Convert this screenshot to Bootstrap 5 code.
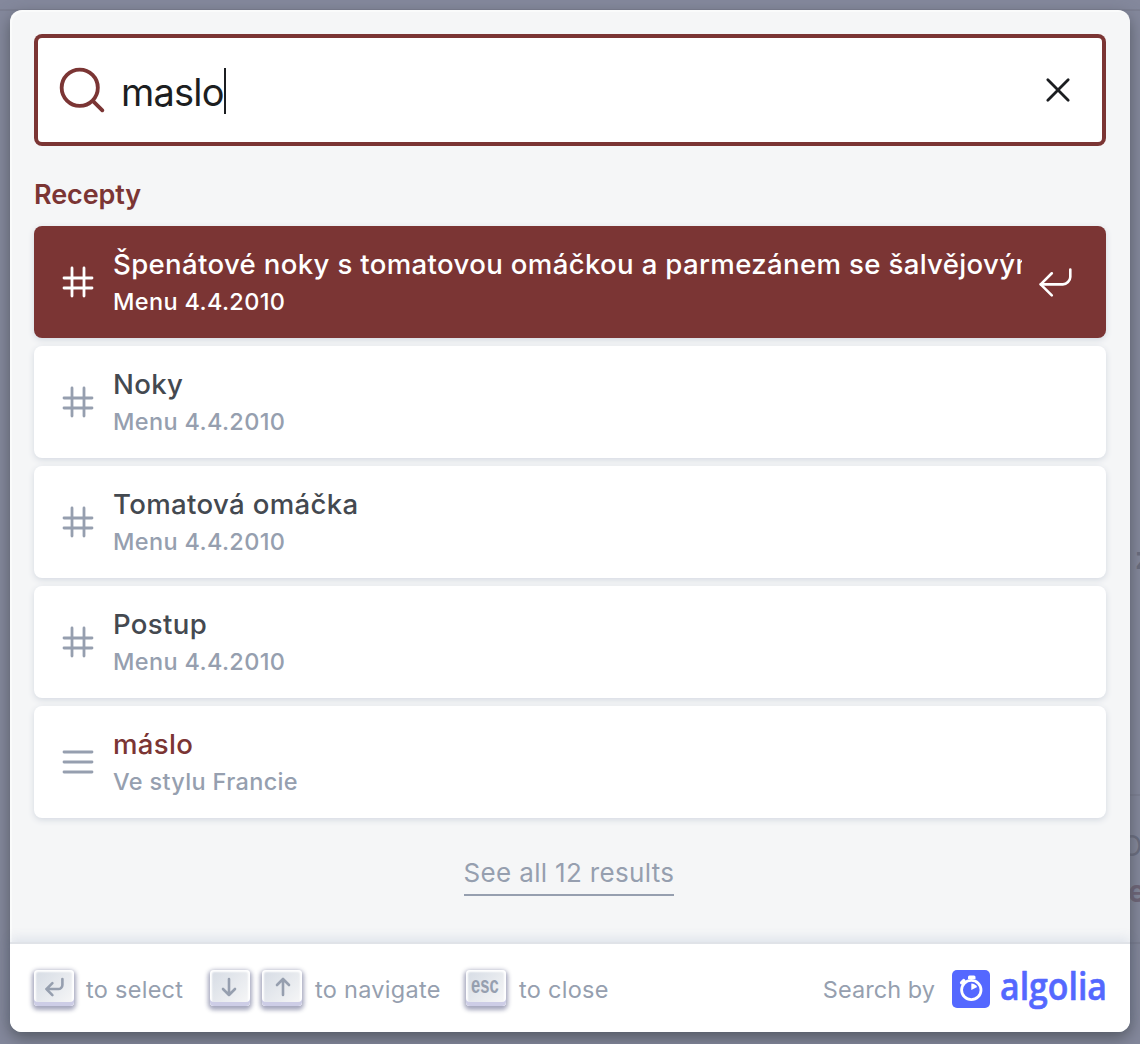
<!DOCTYPE html>
<html lang="cs">
<head>
<meta charset="utf-8">
<meta name="viewport" content="width=device-width, initial-scale=1">
<title>Recepty</title>
<link href="https://cdn.jsdelivr.net/npm/bootstrap@5.3.0/dist/css/bootstrap.min.css" rel="stylesheet">
<style>
:root { --ds-primary:#7b3534; --ds-muted:#969faf; --ds-text:#1c1e21; --ds-hit:#444950; }
body { height:1044px; overflow:hidden; background:#84889c; font-family:Inter,"Liberation Sans",sans-serif; color:var(--ds-text); }
svg { display:block; flex:none; fill:none; stroke:currentColor; stroke-linecap:round; stroke-linejoin:round; }
.page-peek { position:absolute; line-height:1; color:#686b7d; white-space:nowrap; }
.page-rule { position:absolute; height:2px; background:#7c7f92; }
.ds-shell { height:1044px; padding:10px 10px 12px; }
.ds-modal { height:1022px; border-radius:12px; background:#f5f6f7; box-shadow:inset 2px 2px 0 0 rgba(255,255,255,.5),0 6px 16px 0 #555a64; }
.ds-top { padding:24px 24px 0; }
.ds-form { height:112px; padding:0 28px 0 24px; border-radius:8px; background:#fff; box-shadow:inset 0 0 0 4px var(--ds-primary); }
.ds-magnifier { color:var(--ds-primary); stroke-width:1.6; }
.ds-query { margin-left:15px; font-size:38px; line-height:46px; letter-spacing:-.8px; padding-top:4px; }
.ds-caret { width:2px; height:46px; margin-top:2px; background:#1c1e21; }
.ds-body { padding:0 24px; }
.ds-source { height:80px; padding-top:31px; font-size:27px; line-height:36px; font-weight:600; letter-spacing:-.1px; color:var(--ds-primary); }
.ds-hit { height:112px; padding:0 32px 0 24px; margin-bottom:8px; border-radius:8px; background:#fff; box-shadow:0 2px 6px 0 #d4d9e1; color:var(--ds-muted); }
.ds-hit svg { stroke-width:1.4; }
.ds-hit-text { margin:0 15px 0 15px; overflow:hidden; white-space:nowrap; }
.ds-title { font-size:27.6px; line-height:38px; font-weight:500; letter-spacing:.33px; color:var(--ds-hit); }
.ds-path { font-size:23.5px; line-height:36px; font-weight:500; letter-spacing:.34px; position:relative; top:1px; }
.ds-hit.is-active, .ds-hit.is-active .ds-title { color:#fff; }
.ds-hit.is-active { background:var(--ds-primary); }
.ds-title .ds-match { color:var(--ds-primary); }
.ds-all { padding:28px 2px 0 0; font-size:26px; line-height:38px; letter-spacing:.33px; }
.ds-all a { color:var(--ds-muted); text-decoration:none; border-bottom:2px solid var(--ds-muted); padding-bottom:6px; }
.ds-foot { height:88px; padding:0 24px; border-radius:0 0 12px 12px; background:#fff; color:var(--ds-muted); font-size:23.5px; box-shadow:0 -2px 0 0 #e0e3e8,0 -6px 12px 0 rgba(69,98,155,.12); position:relative; }
.ds-key { width:40px; height:36px; padding-bottom:2px; border-radius:4px; background:linear-gradient(-225deg,#d5dbe4,#f8f8f8); box-shadow:inset 0 -4px 0 0 #cdcde6,inset 0 0 2px 2px #fff,0 2px 4px 2px rgba(30,35,90,.4); }
.ds-key + .ds-key { margin-left:12px; }
.ds-key svg { stroke-width:1.3; }
.ds-key text { font:bold 11.8px "Liberation Sans",sans-serif; fill:currentColor; stroke:none; }
.ds-label { line-height:36px; padding-top:4px; white-space:nowrap; letter-spacing:.28px; }
.lb-select { width:136px; padding-left:12px; }
.lb-nav { width:164px; padding-left:13px; }
.lb-close { padding-left:13px; }
.lb-by { padding-right:17px; letter-spacing:.05px; }
.ds-logo text { font:600 38px "Open Sans","Noto Sans",sans-serif; fill:#5468ff; stroke:#5468ff; stroke-width:.6; }
</style>
<script src="https://cdn.jsdelivr.net/npm/bootstrap@5.3.0/dist/js/bootstrap.bundle.min.js"></script>
</head>
<body>
<div class="page-rule" style="left:0;top:9px;width:1140px"></div>
<div class="page-rule" style="left:1100px;top:794px;width:40px"></div>
<div class="page-rule" style="left:1100px;top:942px;width:40px"></div>
<span class="page-peek fw-bold" style="left:1135px;top:543px;font-size:30px">z</span>
<span class="page-peek" style="left:1121px;top:832px;font-size:28px">O</span>
<span class="page-peek fw-bold" style="left:1128px;top:876px;font-size:30px;color:#6c6174">e</span>

<div class="ds-shell position-relative">
<div class="ds-modal d-flex flex-column" role="dialog" aria-label="Search">
  <header class="ds-top">
    <div class="ds-form d-flex align-items-center">
      <svg class="ds-magnifier" width="48" height="48" viewBox="0 0 20 20"><path d="M14.386 14.386l4.0877 4.0877-4.0877-4.0877c-2.9418 2.9419-7.7115 2.9419-10.6533 0-2.9419-2.9418-2.9419-7.7115 0-10.6533 2.9418-2.9419 7.7115-2.9419 10.6533 0 2.9419 2.9418 2.9419 7.7115 0 10.6533z"/></svg>
      <span class="ds-query">maslo</span><span class="ds-caret"></span>
      <svg class="ms-auto" width="40" height="40" viewBox="0 0 20 20" stroke-width="1.4"><path d="M10 10l5.09-5.09L10 10l5.09 5.09L10 10zm0 0L4.91 4.91 10 10l-5.09 5.09L10 10z"/></svg>
    </div>
  </header>

  <main class="ds-body flex-grow-1">
    <div class="ds-source">Recepty</div>

    <div class="ds-hit is-active d-flex align-items-center">
      <svg width="40" height="40" viewBox="0 0 20 20"><path d="M13 13h4-4V8H7v5h6v4-4H7V8H3h4V3v5h6V3v5h4-4v5zm-6 0v4-4H3h4z"/></svg>
      <div class="ds-hit-text flex-grow-1"><div class="ds-title">Špenátové noky s tomatovou omáčkou a parmezánem se šalvějovým máslem</div><div class="ds-path">Menu 4.4.2010</div></div>
      <svg width="37" height="37" viewBox="0 0 20 20"><path d="M18 3v4c0 2-2 4-4 4H2"/><path d="M8 17l-6-6 6-6"/></svg>
    </div>
    <div class="ds-hit d-flex align-items-center">
      <svg width="40" height="40" viewBox="0 0 20 20"><path d="M13 13h4-4V8H7v5h6v4-4H7V8H3h4V3v5h6V3v5h4-4v5zm-6 0v4-4H3h4z"/></svg>
      <div class="ds-hit-text flex-grow-1"><div class="ds-title">Noky</div><div class="ds-path">Menu 4.4.2010</div></div>
    </div>
    <div class="ds-hit d-flex align-items-center">
      <svg width="40" height="40" viewBox="0 0 20 20"><path d="M13 13h4-4V8H7v5h6v4-4H7V8H3h4V3v5h6V3v5h4-4v5zm-6 0v4-4H3h4z"/></svg>
      <div class="ds-hit-text flex-grow-1"><div class="ds-title">Tomatová omáčka</div><div class="ds-path">Menu 4.4.2010</div></div>
    </div>
    <div class="ds-hit d-flex align-items-center">
      <svg width="40" height="40" viewBox="0 0 20 20"><path d="M13 13h4-4V8H7v5h6v4-4H7V8H3h4V3v5h6V3v5h4-4v5zm-6 0v4-4H3h4z"/></svg>
      <div class="ds-hit-text flex-grow-1"><div class="ds-title">Postup</div><div class="ds-path">Menu 4.4.2010</div></div>
    </div>
    <div class="ds-hit d-flex align-items-center">
      <svg width="40" height="40" viewBox="0 0 20 20"><path d="M17 5H3h14zm0 5H3h14zm0 5H3h14z"/></svg>
      <div class="ds-hit-text flex-grow-1"><div class="ds-title"><span class="ds-match">máslo</span></div><div class="ds-path">Ve stylu Francie</div></div>
    </div>

    <div class="ds-all text-center"><a href="#">See all 12 results</a></div>
  </main>

  <footer class="ds-foot d-flex align-items-center justify-content-between">
    <div class="d-flex align-items-center">
      <span class="ds-key d-flex align-items-center justify-content-center"><svg width="30" height="30" viewBox="0 0 15 15"><path d="M11.7 3.53088v3c0 1-1 2-2 2H3.7M6.7 11.53088l-3-3 3-3"/></svg></span>
      <span class="ds-label lb-select">to select</span>
      <span class="ds-key d-flex align-items-center justify-content-center"><svg width="30" height="30" viewBox="0 0 15 15"><path d="M7 3.5v8M10 8.500l-3 3-3-3"/></svg></span>
      <span class="ds-key d-flex align-items-center justify-content-center"><svg width="30" height="30" viewBox="0 0 15 15"><path d="M8 11.5v-8M11 6.500l-3-3-3 3"/></svg></span>
      <span class="ds-label lb-nav">to navigate</span>
      <span class="ds-key d-flex align-items-center justify-content-center"><svg width="30" height="30" viewBox="0 0 15 15"><text x="0" y="10.500" textLength="13.8" lengthAdjust="spacingAndGlyphs">esc</text></svg></span>
      <span class="ds-label lb-close">to close</span>
    </div>
    <div class="d-flex align-items-center">
      <span class="ds-label lb-by">Search by</span>
      <svg class="ds-logo" width="154" height="48" viewBox="0 0 154 48" aria-label="Algolia">
        <rect x="0" y="6" width="38" height="38" rx="5" fill="#5468ff" stroke="none"/>
        <circle cx="19.3" cy="26" r="9.7" stroke="#fff" stroke-width="2.8"/>
        <path d="M16 15v-2q0-1.5 1.500-1.500h4.500q1.500 0 1.500 1.500v2z" fill="#fff" stroke="none"/>
        <path d="M9.700 18.700l2-2" stroke="#fff" stroke-width="3.600"/>
        <path d="M19.300 26v-6.500q4 .2 5.900 3.400z" fill="#fff" stroke="none"/>
        <text x="48" y="36" textLength="107" lengthAdjust="spacingAndGlyphs">algolia</text>
      </svg>
    </div>
  </footer>
</div>
</div>
</body>
</html>
